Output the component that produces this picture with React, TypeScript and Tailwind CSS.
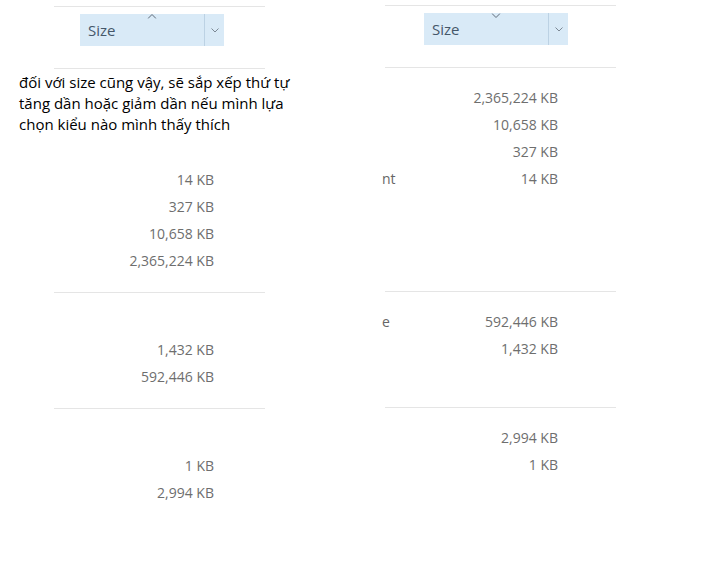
type Group = { rows: { size: string; name?: string }[] }

/* ── Sorted columns (ascending left, descending right) ───────────── */
const ascGroups: Group[] = [
  { rows: [{ size: "" }, { size: "" }, { size: "" }, { size: "14 KB" }, { size: "327 KB" }, { size: "10,658 KB" }, { size: "2,365,224 KB" }] },
  { rows: [{ size: "" }, { size: "1,432 KB" }, { size: "592,446 KB" }] },
  { rows: [{ size: "" }, { size: "1 KB" }, { size: "2,994 KB" }] },
]

const descGroups: Group[] = [
  { rows: [{ size: "2,365,224 KB" }, { size: "10,658 KB" }, { size: "327 KB" }, { size: "14 KB", name: "nt" }, { size: "" }, { size: "" }, { size: "" }] },
  { rows: [{ size: "592,446 KB", name: "e" }, { size: "1,432 KB" }, { size: "" }] },
  { rows: [{ size: "2,994 KB" }, { size: "1 KB" }, { size: "" }] },
]

function SortArrow({ dir }: { dir: "up" | "down" }) {
  return (
    <svg width="9" height="5" viewBox="0 0 9 5" className="absolute left-1/2 -translate-x-1/2 top-0" fill="none">
      <path
        d={dir === "up" ? "M0.5 4.5 L4.5 0.5 L8.5 4.5" : "M0.5 0.5 L4.5 4.5 L8.5 0.5"}
        stroke="#5f6b78"
        strokeWidth="1"
      />
    </svg>
  )
}

function Panel({
  className,
  indent,
  dir,
  groups,
}: {
  className: string
  indent: string
  dir: "up" | "down"
  groups: Group[]
}) {
  return (
    <div className={`flex flex-col ${className}`}>
      {/* header */}
      <div className={`border-t border-[#e5e5e5] pt-[7px] pb-[22px] ${indent}`}>
        <div className="relative flex w-[144px] h-[32px] bg-[#d9eaf7]">
          <SortArrow dir={dir} />
          <div className="flex-1 flex items-center pl-[8px] text-[15px] text-[#45576a]">Size</div>
          <div className="w-[20px] border-l border-[#bcd2e4] flex items-center justify-center">
            <svg width="8" height="5" viewBox="0 0 8 5" fill="none">
              <path d="M0.5 0.5 L4 4 L7.5 0.5" stroke="#7c8894" strokeWidth="1" />
            </svg>
          </div>
        </div>
      </div>

      {/* groups */}
      {groups.map((g, gi) => (
        <div key={gi} className="border-t border-[#e5e5e5] pt-[16px] pb-[18px]">
          {g.rows.map((r, ri) => (
            <div key={ri} className="relative flex h-[27px] items-center">
              {r.name && (
                <span className="absolute left-[-3px] text-[14px] text-[#666666]">{r.name}</span>
              )}
              <div className={`${indent} w-full`}>
                <div className="w-[144px] pr-[10px] text-right text-[14px] text-[#6e6e6e]">{r.size}</div>
              </div>
            </div>
          ))}
        </div>
      ))}
    </div>
  )
}

export default function App() {
  return (
    <div className="relative w-[712px] h-[584px] bg-white flex items-start font-['Open_Sans',sans-serif]">
      <Panel className="ml-[54px] mt-[6px] w-[211px]" indent="pl-[26px]" dir="up" groups={ascGroups} />
      <Panel className="ml-[120px] mt-[5px] w-[231px]" indent="pl-[39px]" dir="down" groups={descGroups} />

      {/* annotation note */}
      <p className="absolute left-[19px] top-[72px] w-[300px] bg-white text-[15px] leading-[21px] text-black">
        đối với size cũng vậy, sẽ sắp xếp thứ tự
        <br />
        tăng dần hoặc giảm dần nếu mình lựa
        <br />
        chọn kiểu nào mình thấy thích
      </p>
    </div>
  )
}
